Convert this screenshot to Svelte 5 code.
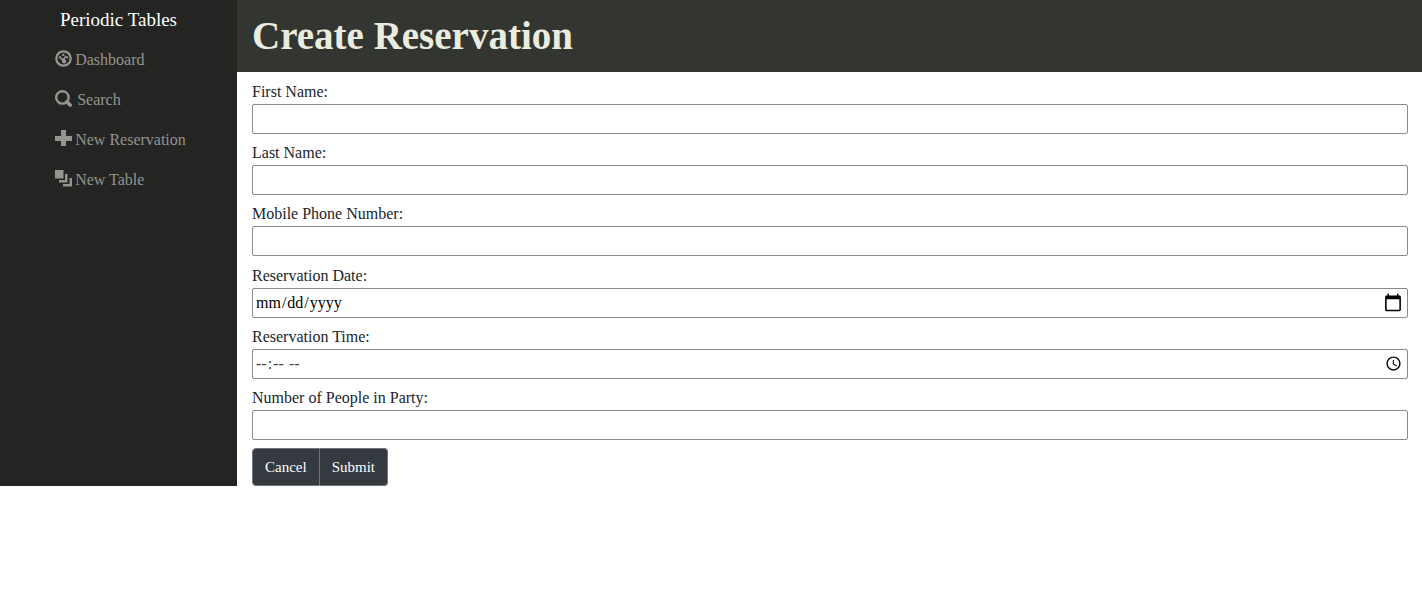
<script>
  const links = [
    { label: 'Dashboard', icon: 'dashboard' },
    { label: 'Search', icon: 'search' },
    { label: 'New Reservation', icon: 'plus' },
    { label: 'New Table', icon: 'layers' },
  ];

  const fields = [
    { id: 'first_name', label: 'First Name:', type: 'text' },
    { id: 'last_name', label: 'Last Name:', type: 'text' },
    { id: 'mobile_number', label: 'Mobile Phone Number:', type: 'tel' },
    { id: 'reservation_date', label: 'Reservation Date:', type: 'date' },
    { id: 'reservation_time', label: 'Reservation Time:', type: 'time' },
    { id: 'people', label: 'Number of People in Party:', type: 'text' },
  ];
</script>

<div class="layout">
  <nav class="sidebar">
    <a class="brand" href="#home">Periodic Tables</a>
    <ul>
      {#each links as link}
        <li>
          <a class="link" class:spaced={link.icon === 'search'} href={'#' + link.icon}>
            <svg viewBox="0 0 17 17" aria-hidden="true">
              {#if link.icon === 'dashboard'}
                <circle cx="8.5" cy="8.5" r="7.2" fill="none" stroke="currentColor" stroke-width="2.3" />
                <circle cx="5" cy="7.2" r="1.2" />
                <circle cx="8.3" cy="4.9" r="1.2" />
                <circle cx="12" cy="7.3" r="1.2" />
                <path d="M4.6 7.6 8.2 8.4 10.2 5.6 11 6.2 9.9 9.2A2.2 2.2 0 1 1 6.9 10.8Z" />
              {:else if link.icon === 'search'}
                <circle cx="7.4" cy="7.4" r="6.2" fill="none" stroke="currentColor" stroke-width="2.4" />
                <path d="M11.8 11.8 15.2 15" fill="none" stroke="currentColor" stroke-width="3.6" stroke-linecap="round" />
              {:else if link.icon === 'plus'}
                <path d="M6 0h5v6h6v5h-6v5H6v-5H0V6h6Z" />
              {:else}
                <path d="M0 0h8.5v8.5H0Z" />
                <path d="M10 4h2.5v8.5H4V10h6Z" />
                <path d="M14.5 8H17v8.5H8V14h6.5Z" />
              {/if}
            </svg>
            <span>{link.label}</span>
          </a>
        </li>
      {/each}
    </ul>
  </nav>

  <main>
    <header><h1>Create Reservation</h1></header>
    <form>
      <div class="fields">
        {#each fields as field}
          <div class="field">
            <label for={field.id}>{field.label}</label>
            <input id={field.id} name={field.id} type={field.type} />
          </div>
        {/each}
      </div>
      <div class="buttons">
        <button type="button">Cancel</button>
        <button type="submit">Submit</button>
      </div>
    </form>
  </main>
</div>

<style>
  :global(body) {
    background: #fff;
    color: #212529;
    font-family: 'Liberation Serif', serif;
    font-size: 16px;
    line-height: 24px;
  }

  .layout {
    display: grid;
    grid-template-columns: 1fr 5fr;
  }

  .sidebar {
    display: flex;
    flex-direction: column;
    align-items: center;
    background: #242422;
  }

  .brand {
    padding: 5px 0;
    color: #fff;
    font-size: 19px;
    line-height: 30px;
    text-decoration: none;
  }

  ul {
    margin: 0;
    padding: 0 0 0 4px;
    list-style: none;
  }

  .link {
    display: flex;
    align-items: center;
    gap: 3px;
    padding: 8px 0;
    color: #949491;
    text-decoration: none;
  }

  .spaced {
    gap: 5px;
  }

  svg {
    width: 17px;
    height: 17px;
    margin-bottom: 4px;
    fill: currentColor;
  }

  header {
    padding: 12px 15px;
    background: #333531;
  }

  h1 {
    margin: 0;
    color: #eaecdf;
    font-size: 39px;
    font-weight: 700;
    line-height: 48px;
  }

  form {
    padding: 8px 14px 0 15px;
  }

  .fields {
    display: grid;
    align-content: space-between;
    min-height: 360px;
  }

  .field {
    display: grid;
  }

  input {
    box-sizing: border-box;
    width: 100%;
    height: 30px;
    margin: 0;
    padding: 1px 2px;
    border: 1px solid #8a8a8a;
    border-radius: 2px;
    background: #fff;
    color: #000;
    font: inherit;
  }

  input[type='time'] {
    color: #444;
  }

  input[type='date']::-webkit-calendar-picker-indicator {
    width: 20px;
    height: 20px;
  }

  .buttons {
    display: flex;
    margin-top: 8px;
  }

  button {
    padding: 6px 12px;
    border: 1px solid #6c757d;
    border-radius: 4px 0 0 4px;
    background: #343a40;
    color: #fff;
    font: inherit;
    font-size: 15px;
  }

  button + button {
    border-left: 0;
    border-radius: 0 4px 4px 0;
  }
</style>
